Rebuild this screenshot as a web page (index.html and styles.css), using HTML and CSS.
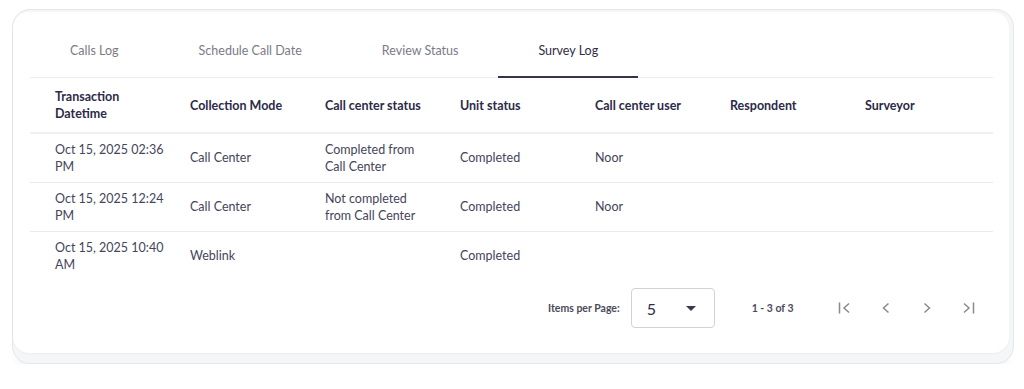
FILE: index.html
```html
<!DOCTYPE html>
<html>
<head>
<meta charset="utf-8">
<link rel="stylesheet" href="styles.css">
</head>
<body>
<div class="frame">
  <div class="card">
    <nav class="tabs">
      <div class="tab">Calls Log</div>
      <div class="tab">Schedule Call Date</div>
      <div class="tab">Review Status</div>
      <div class="tab active">Survey Log</div>
    </nav>
    <table class="log">
      <thead>
        <tr>
          <th>Transaction<br>Datetime</th>
          <th>Collection Mode</th>
          <th>Call center status</th>
          <th>Unit status</th>
          <th>Call center user</th>
          <th>Respondent</th>
          <th class="last">Surveyor</th>
        </tr>
      </thead>
      <tbody>
        <tr>
          <td>Oct 15, 2025 02:36<br>PM</td>
          <td>Call Center</td>
          <td>Completed from<br>Call Center</td>
          <td>Completed</td>
          <td>Noor</td>
          <td></td>
          <td></td>
        </tr>
        <tr>
          <td>Oct 15, 2025 12:24<br>PM</td>
          <td>Call Center</td>
          <td>Not completed<br>from Call Center</td>
          <td>Completed</td>
          <td>Noor</td>
          <td></td>
          <td></td>
        </tr>
        <tr class="nob">
          <td>Oct 15, 2025 10:40<br>AM</td>
          <td>Weblink</td>
          <td></td>
          <td>Completed</td>
          <td></td>
          <td></td>
          <td></td>
        </tr>
      </tbody>
    </table>
    <div class="pager">
      <span class="ipp">Items per Page:</span>
      <div class="select"><span class="val">5</span><span class="caret"></span></div>
      <span class="range">1 - 3 of 3</span>
      <div class="navs">
        <svg width="16" height="16" viewBox="0 0 16 16"><path d="M2.5 2.5v11M12 3.5 7 8l5 4.5" fill="none" stroke="#8a8a8a" stroke-width="1.5"/></svg>
        <svg width="16" height="16" viewBox="0 0 16 16"><path d="M10.5 3.5 5.5 8l5 4.5" fill="none" stroke="#8a8a8a" stroke-width="1.5"/></svg>
        <svg width="16" height="16" viewBox="0 0 16 16"><path d="M5.5 3.5 10.5 8l-5 4.5" fill="none" stroke="#8a8a8a" stroke-width="1.5"/></svg>
        <svg width="16" height="16" viewBox="0 0 16 16"><path d="M4 3.5 9 8l-5 4.5M13.5 2.5v11" fill="none" stroke="#8a8a8a" stroke-width="1.5"/></svg>
      </div>
    </div>
  </div>
</div>
</body>
</html>
```

FILE: styles.css
```css
* { box-sizing: border-box; }
html, body { margin: 0; padding: 0; background: #fff; }
body {
  font-family: Lato, "Open Sans", sans-serif;
  color: #4b4a5c;
  padding: 9px 10px 0 12px;
}
.frame {
  width: 1002px;
  height: 355px;
  border: 1px solid #e3e7ec;
  border-radius: 18px;
  background: #f4f6f8;
  padding: 2px 4px 10px 0;
  box-shadow: 0 12px 6px -4px #f6f7f8;
}
.card {
  height: 100%;
  background: #fff;
  border-radius: 16px;
  box-shadow: 0 1px 2px rgba(0,0,0,0.04);
  padding: 0 0 0 17px;
}
.tabs {
  display: flex;
  height: 66px;
  width: 963px;
  border-bottom: 1px solid #eceef1;
}
.tab {
  padding: 31px 40px 0;
  font-size: 12.5px;
  color: #7b7b86;
  height: 66px;
}
.tab.active {
  color: #2f2d45;
  border-bottom: 2px solid #35344a;
  margin-bottom: -1px;
}
.log {
  width: 963px;
  border-collapse: collapse;
  table-layout: fixed;
}
.log th, .log td {
  text-align: left;
  padding: 0 0 0 25px;
  width: 135px;
  line-height: 17px;
  vertical-align: middle;
}
.log th.last { width: 153px; }
.log th {
  font-size: 12.5px;
  font-weight: 700;
  color: #2c2a48;
  height: 55px;
  border-bottom: 2px solid #eef0f2;
}
.log td {
  font-size: 12.5px;
  color: #45445a;
  height: 49px;
  border-bottom: 1px solid #e9ebee;
}
.log tr.nob td { border-bottom: none; }
.pager {
  display: flex;
  align-items: center;
  margin-top: 8px;
  padding-left: 518px;
  height: 40px;
}
.ipp {
  font-size: 10.5px;
  font-weight: 700;
  color: #4b4a5c;
}
.select {
  margin-left: 11px;
  width: 84px;
  height: 40px;
  border: 1px solid #cfd2d6;
  border-radius: 4px;
  display: flex;
  align-items: center;
  justify-content: space-between;
  padding: 0 18px 0 15px;
}
.val { font-size: 16px; color: #2f2d45; }
.caret {
  width: 0; height: 0;
  border-left: 5px solid transparent;
  border-right: 5px solid transparent;
  border-top: 5px solid #3a3a48;
}
.range {
  margin-left: 37px;
  font-size: 10.5px;
  font-weight: 700;
  color: #4b4a5c;
}
.navs {
  display: flex;
  gap: 25px;
  margin-left: 43px;
}
.navs svg { display: block; }
```
